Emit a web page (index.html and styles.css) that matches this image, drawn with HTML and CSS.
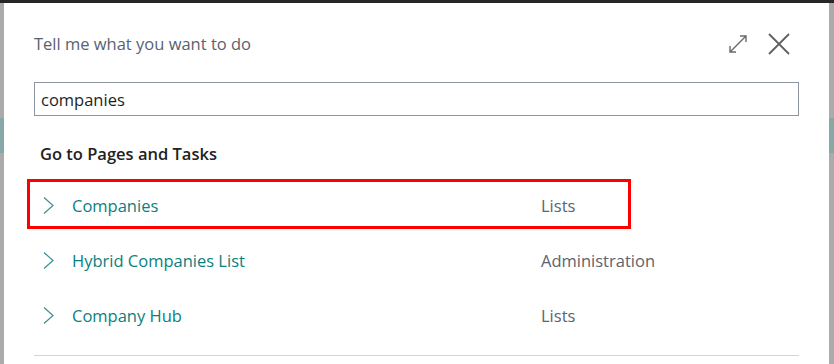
FILE: index.html
```html
<!DOCTYPE html>
<html lang="en">
<head>
<meta charset="utf-8">
<title>Tell me what you want to do</title>
<link rel="stylesheet" href="styles.css">
</head>
<body>
<div class="topbar"></div>
<div class="dialog">
  <div class="header">
    <span class="title">Tell me what you want to do</span>
    <div class="actions">
      <svg class="icon" width="20" height="20" viewBox="0 0 20 20" aria-label="Expand">
        <path d="M2 18 L18 2 M12 2 H18 V8 M2 12 V18 H8" fill="none" stroke="#6b6b6b" stroke-width="1.4"/>
      </svg>
      <svg class="icon" width="22" height="22" viewBox="0 0 22 22" aria-label="Close">
        <path d="M1 1 L21 21 M21 1 L1 21" fill="none" stroke="#606060" stroke-width="1.8"/>
      </svg>
    </div>
  </div>
  <div class="search"><span class="search-text">companies</span></div>
  <div class="section">Go to Pages and Tasks</div>
  <ul class="results">
    <li class="row">
      <svg class="chev" width="11" height="17" viewBox="0 0 11 17"><path d="M1 0.5 L10 8.5 L1 16.5" fill="none" stroke="#3a8f90" stroke-width="1.2"/></svg>
      <span class="name">Companies</span>
      <span class="cat">Lists</span>
      <span class="highlight"></span>
    </li>
    <li class="row">
      <svg class="chev" width="11" height="17" viewBox="0 0 11 17"><path d="M1 0.5 L10 8.5 L1 16.5" fill="none" stroke="#3a8f90" stroke-width="1.2"/></svg>
      <span class="name">Hybrid Companies List</span>
      <span class="cat">Administration</span>
    </li>
    <li class="row">
      <svg class="chev" width="11" height="17" viewBox="0 0 11 17"><path d="M1 0.5 L10 8.5 L1 16.5" fill="none" stroke="#3a8f90" stroke-width="1.2"/></svg>
      <span class="name">Company Hub</span>
      <span class="cat">Lists</span>
    </li>
  </ul>
  <div class="divider"></div>
</div>
</body>
</html>
```

FILE: styles.css
```css
html, body {
  margin: 0;
  padding: 0;
}
body {
  width: 834px;
  height: 364px;
  overflow: hidden;
  font-family: "Open Sans", "Noto Sans", sans-serif;
  background: linear-gradient(to bottom, #ababab 0, #ababab 118px, #86a9a7 118px, #86a9a7 153px, #ababab 153px, #ababab 100%);
}
.topbar {
  height: 3px;
  background: #262626;
}
.dialog {
  margin: 0 5px 0 4px;
  height: 361px;
  background: #ffffff;
  padding: 0 30px;
  box-sizing: border-box;
  overflow: hidden;
}
.header {
  display: flex;
  justify-content: space-between;
  align-items: center;
  padding-top: 29px;
  height: 24px;
}
.title {
  font-size: 16.5px;
  line-height: 24px;
  color: #59626f;
}
.actions {
  display: flex;
  align-items: center;
  gap: 20px;
  margin-right: 9px;
}
.icon {
  display: block;
}
.search {
  margin-top: 26px;
  height: 34px;
  box-sizing: border-box;
  border: 1px solid #8d95a3;
  display: flex;
  align-items: center;
  padding-left: 6px;
}
.search-text {
  font-size: 16.5px;
  color: #1e1e1e;
}
.section {
  margin-top: 26px;
  padding-left: 6px;
  font-size: 16.5px;
  line-height: 24px;
  font-weight: 600;
  color: #222222;
}
.results {
  list-style: none;
  margin: 12px 0 0;
  padding: 0;
}
.row {
  position: relative;
  display: flex;
  align-items: center;
  height: 55px;
  font-size: 16.5px;
}
.chev {
  margin-left: 9px;
  display: block;
}
.name {
  margin-left: 18px;
  width: 469px;
  color: #0a7f80;
}
.cat {
  color: #5b6370;
}
.highlight {
  position: absolute;
  left: -7px;
  top: 1px;
  width: 604px;
  height: 50px;
  box-sizing: border-box;
  border: 3px solid #ff0000;
}
.divider {
  margin-top: 12px;
  border-top: 1px solid #d4d4d4;
}
```
